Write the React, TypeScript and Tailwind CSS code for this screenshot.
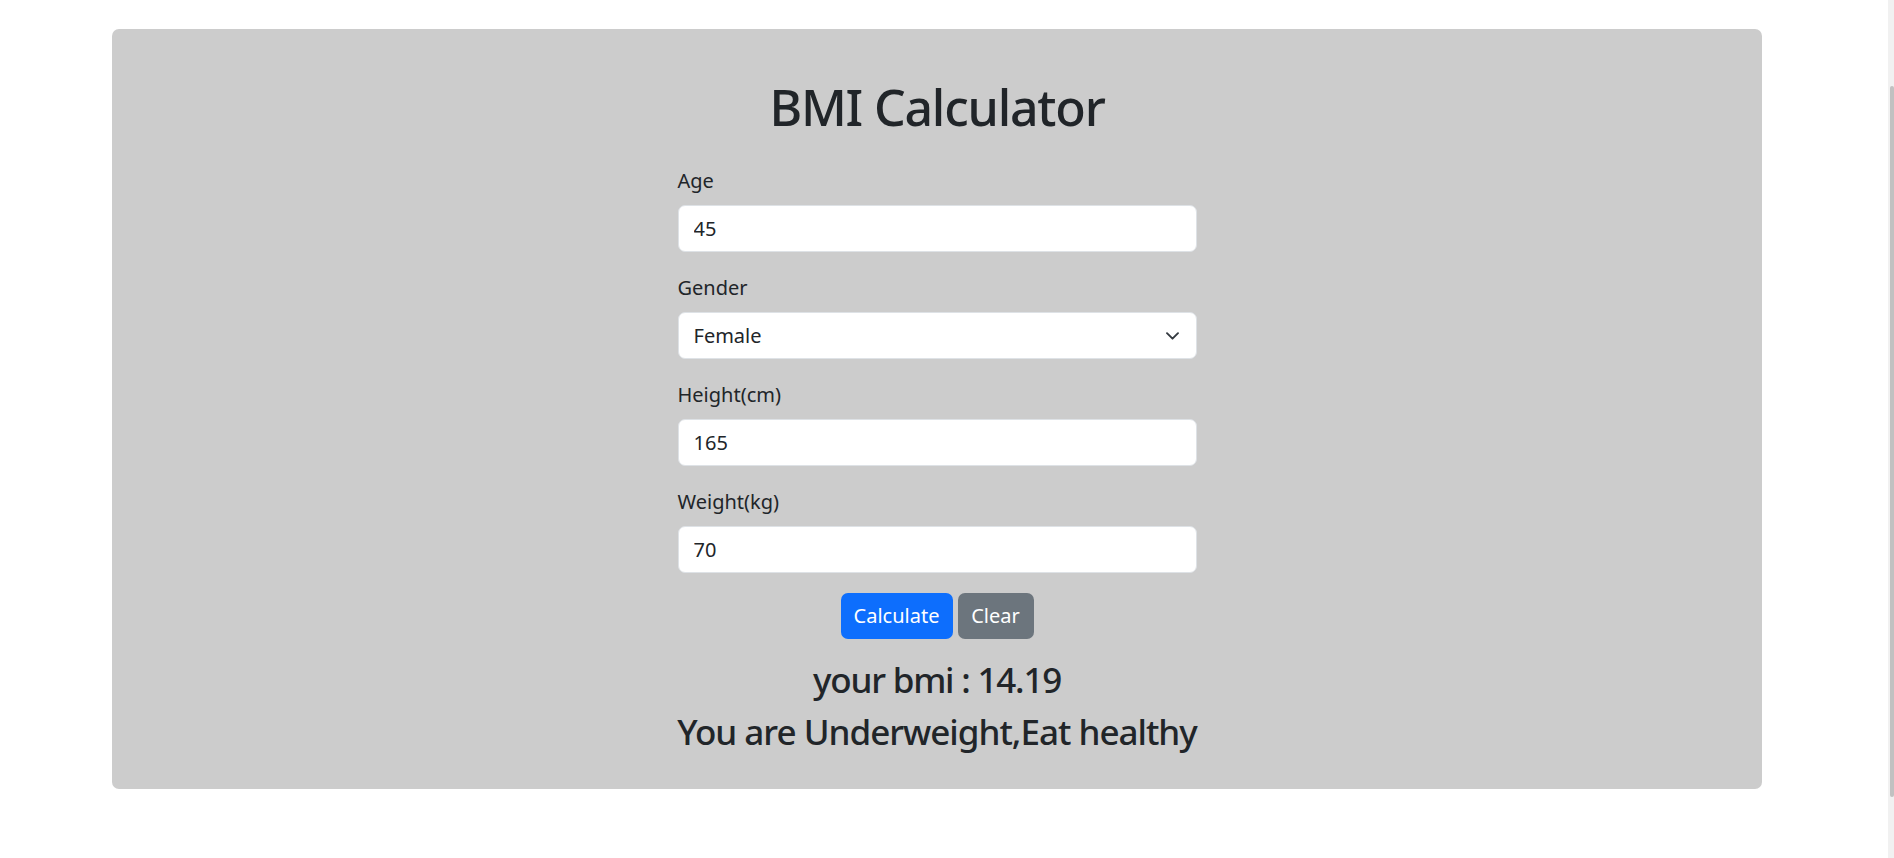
import React from "react";

function Label({ children }: { children: React.ReactNode }) {
  return <label className="block pt-[1px] mb-[9px] text-[20px] leading-[30px]">{children}</label>;
}

function Field({ label, value }: { label: string; value: string }) {
  return (
    <div className="mb-[20px]">
      <Label>{label}</Label>
      <input
        readOnly
        value={value}
        className="block w-full h-[47px] rounded-[7px] border border-[#dee2e6] bg-white px-[15px] text-[20px] leading-[30px] text-[#212529] outline-none"
      />
    </div>
  );
}

export default function App() {
  return (
    <div className="relative min-h-screen bg-white font-['Noto_Sans',sans-serif] text-[#212529]">
      <div className="pt-[29px] pl-[112px]">
        <div className="w-[1650px] rounded-[7px] bg-[#cccccc] pt-[48px] pb-[36px] flex flex-col items-center">
          <h1 className="text-[50px] leading-[60px] font-medium tracking-[-1.2px]">BMI Calculator</h1>
          <form className="w-[519px] mt-[28px]">
            <Field label="Age" value="45" />
            <div className="mb-[20px]">
              <Label>Gender</Label>
              <div className="relative">
                <select
                  defaultValue="Female"
                  className="block w-full h-[47px] appearance-none rounded-[7px] border border-[#dee2e6] bg-white pl-[15px] pr-[50px] text-[20px] leading-[30px] text-[#212529] outline-none"
                >
                  <option>Male</option>
                  <option>Female</option>
                </select>
                <svg
                  className="pointer-events-none absolute right-[18px] top-[20px]"
                  width="13"
                  height="8"
                  viewBox="0 0 13 8"
                  fill="none"
                >
                  <path d="M1 1.2l5.5 5.5 5.5-5.5" stroke="#343a40" strokeWidth="1.9" strokeLinecap="round" strokeLinejoin="round" />
                </svg>
              </div>
            </div>
            <Field label="Height(cm)" value="165" />
            <Field label="Weight(kg)" value="70" />
            <div className="flex justify-center gap-[5px]">
              <button
                type="button"
                className="w-[112px] h-[46px] rounded-[7px] bg-[#0d6efd] text-white text-[20px] leading-[30px]"
              >
                Calculate
              </button>
              <button
                type="button"
                className="w-[76px] h-[46px] rounded-[7px] bg-[#6c757d] text-white text-[20px] leading-[30px]"
              >
                Clear
              </button>
            </div>
          </form>
          <h3 className="mt-[20px] text-[35px] leading-[42px] font-medium tracking-[-1.2px]">your bmi : 14.19</h3>
          <h3 className="mt-[10px] text-[35px] leading-[42px] font-medium tracking-[-1px]">You are Underweight,Eat healthy</h3>
        </div>
      </div>
      <div className="fixed right-0 top-0 h-[858px] w-[6px] bg-[#f1f1f1]">
        <div className="absolute right-0 top-[86px] h-[711px] w-[4px] rounded-[2px] bg-[#c1c1c1]" />
      </div>
    </div>
  );
}
